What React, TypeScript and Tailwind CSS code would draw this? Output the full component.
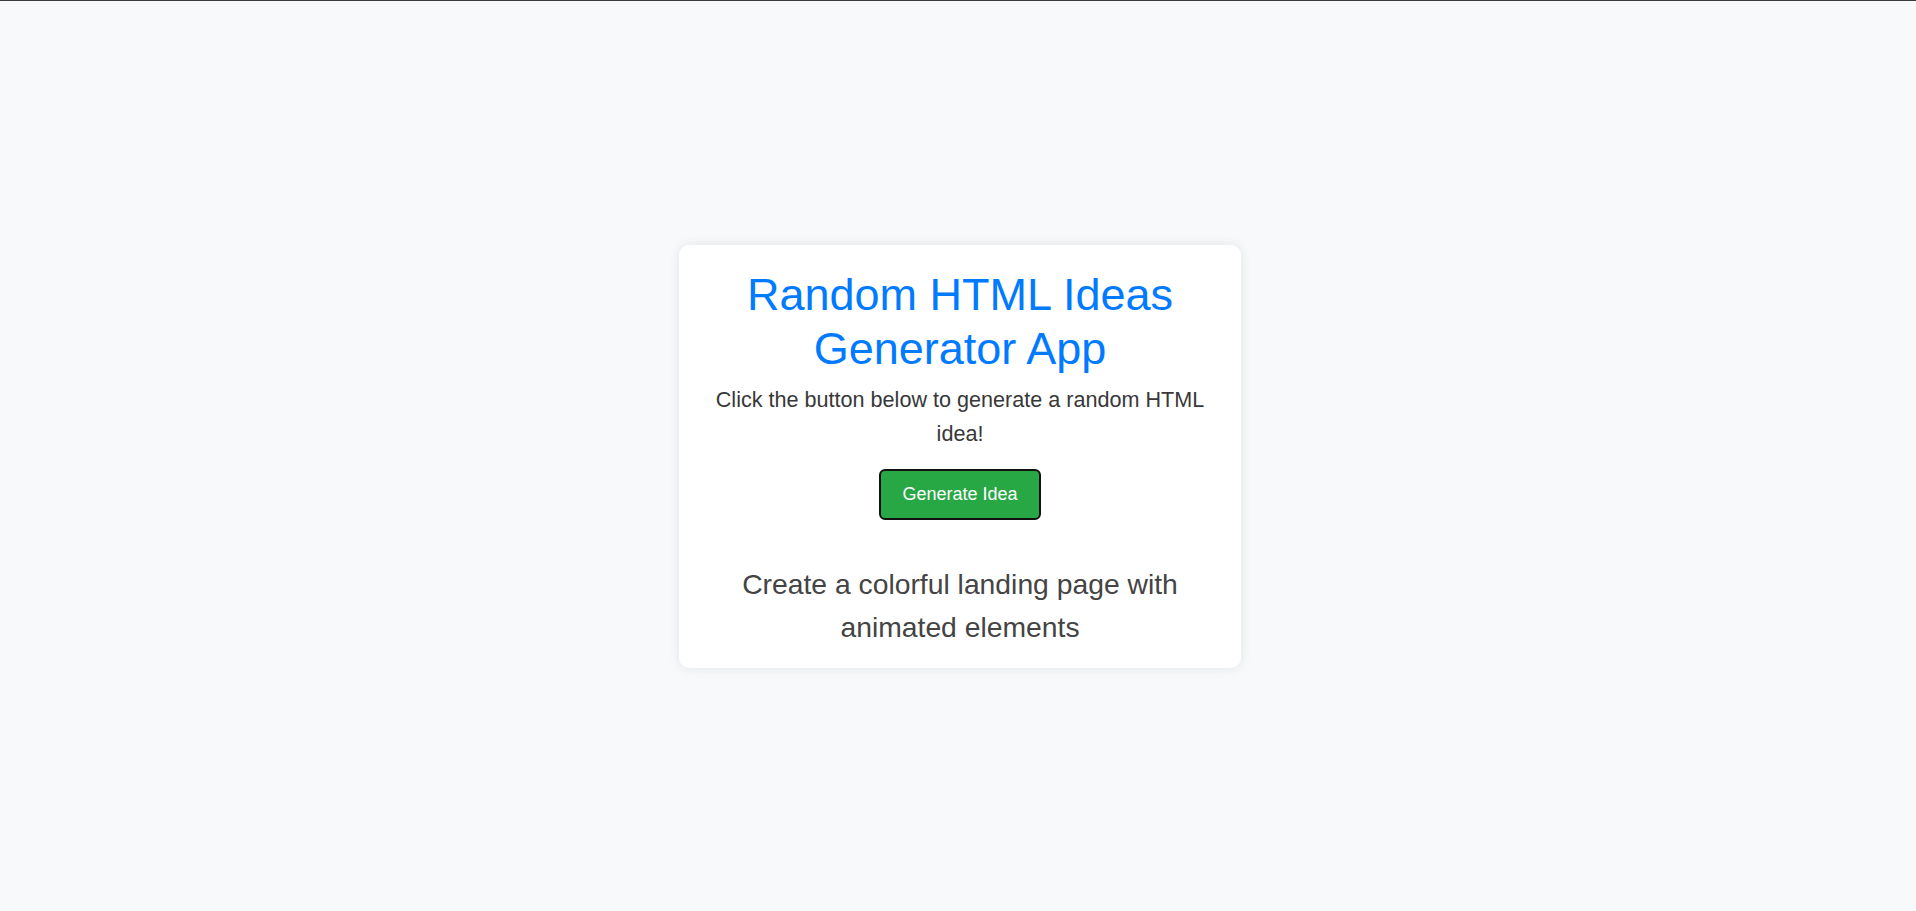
import React, { useState } from "react";

const IDEAS = [
  "Create a colorful landing page with animated elements",
  "Build a responsive photo gallery with a lightbox",
  "Design a personal portfolio with a dark mode toggle",
  "Make a to-do list app with local storage",
];

export default function App() {
  const [idea, setIdea] = useState(IDEAS[0]);

  const generate = () => {
    const next = IDEAS[Math.floor(Math.random() * IDEAS.length)];
    setIdea(next);
  };

  return (
    <div
      className="min-h-screen w-full bg-[#f8f9fa] border-t border-[#3a3a3a] flex items-center justify-center pl-[4px] pt-[1px]"
      style={{ fontFamily: '"Liberation Sans", Arial, Helvetica, sans-serif' }}
    >
      <div className="w-[562px] bg-white rounded-[10px] shadow-[0_0_12px_rgba(0,0,0,0.09)] px-[20px] pt-[23px] pb-[19px] flex flex-col items-center text-center">
        <h1 className="text-[45px] leading-[54px] text-[#007bff] font-normal m-0 mb-[7px]">
          Random HTML Ideas Generator App
        </h1>
        <p className="text-[21.6px] leading-[33.5px] text-[#383838] m-0">
          Click the button below to generate a random HTML idea!
        </p>
        <button
          onClick={generate}
          className="mt-[19px] bg-[#28a745] text-white text-[18px] leading-[19px] px-[21px] py-[14px] border-2 border-[#111111] rounded-[6px] cursor-pointer"
        >
          Generate Idea
        </button>
        <p className="mt-[43px] text-[28.3px] leading-[43px] text-[#444444] m-0">
          {idea}
        </p>
      </div>
    </div>
  );
}
